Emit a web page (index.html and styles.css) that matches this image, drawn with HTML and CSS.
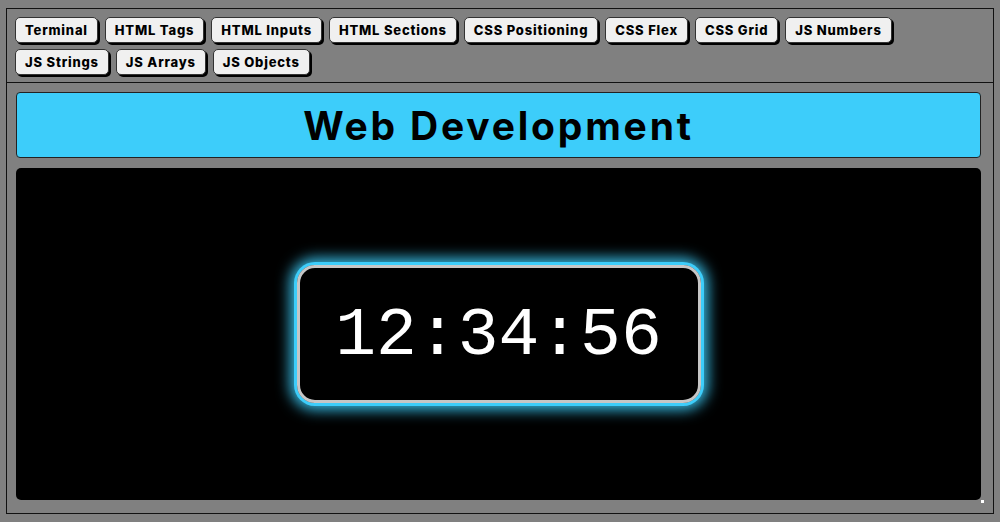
FILE: index.html
```html
<!DOCTYPE html>
<html lang="en">
<head>
<meta charset="utf-8">
<title>Web Development</title>
<link rel="stylesheet" href="styles.css">
</head>
<body>
<div class="frame">
  <nav class="nav">
    <button class="btn">Terminal</button>
    <button class="btn">HTML Tags</button>
    <button class="btn">HTML Inputs</button>
    <button class="btn">HTML Sections</button>
    <button class="btn">CSS Positioning</button>
    <button class="btn">CSS Flex</button>
    <button class="btn">CSS Grid</button>
    <button class="btn">JS Numbers</button>
    <button class="btn">JS Strings</button>
    <button class="btn">JS Arrays</button>
    <button class="btn">JS Objects</button>
  </nav>
  <main class="main">
    <header class="title-bar"><h1 class="title">Web Development</h1></header>
    <section class="stage">
      <div class="clock">12:34:56</div>
      <span class="handle"></span>
    </section>
  </main>
</div>
</body>
</html>
```

FILE: styles.css
```css
* { box-sizing: border-box; }
html, body { margin: 0; padding: 0; }
body {
  background: #808080;
  width: 1000px;
  height: 522px;
  padding: 8px 6px 8px 6px;
  font-family: "Inter", "Open Sans", sans-serif;
}
.frame {
  border: 1px solid #111;
  height: 506px;
  display: flex;
  flex-direction: column;
}
.nav {
  display: flex;
  flex-wrap: wrap;
  column-gap: 7px;
  row-gap: 6px;
  padding: 8px 8px 7px 8px;
  border-bottom: 1px solid #111;
}
.btn {
  height: 26px;
  padding: 0 9px;
  background: #f0f0f0;
  border: 1px solid #333;
  border-radius: 5px;
  box-shadow: 2px 2px 0 #000;
  font-family: "Inter", "Open Sans", sans-serif;
  font-weight: 800;
  font-size: 13px;
  letter-spacing: 0.8px;
  color: #000;
  cursor: pointer;
}
.main {
  flex: 1;
  display: flex;
  flex-direction: column;
  gap: 10px;
  padding: 9px 12px 13px 9px;
  position: relative;
}
.title-bar {
  height: 66px;
  background: #3dcdfa;
  border: 1px solid #222;
  border-radius: 4px;
  display: flex;
  align-items: center;
  justify-content: center;
}
.title {
  margin: 0;
  font-size: 39px;
  font-weight: 700;
  letter-spacing: 2.8px;
  color: #000;
}
.stage {
  flex: 1;
  background: #000;
  border-radius: 5px;
  display: flex;
  align-items: center;
  justify-content: center;
  position: relative;
}
.clock {
  width: 404px;
  height: 138px;
  border: 3px solid #c6c6c6;
  border-radius: 18px;
  box-shadow: 0 0 0 3px #3dcdfa, 0 0 14px 7px rgba(61, 205, 250, 0.9);
  display: flex;
  align-items: center;
  justify-content: center;
  font-family: "Liberation Mono", monospace;
  font-size: 68px;
  color: #fff;
  padding-top: 2px;
}
.handle {
  position: absolute;
  right: -3px;
  bottom: -3px;
  width: 3px;
  height: 3px;
  background: #fff;
}
```
